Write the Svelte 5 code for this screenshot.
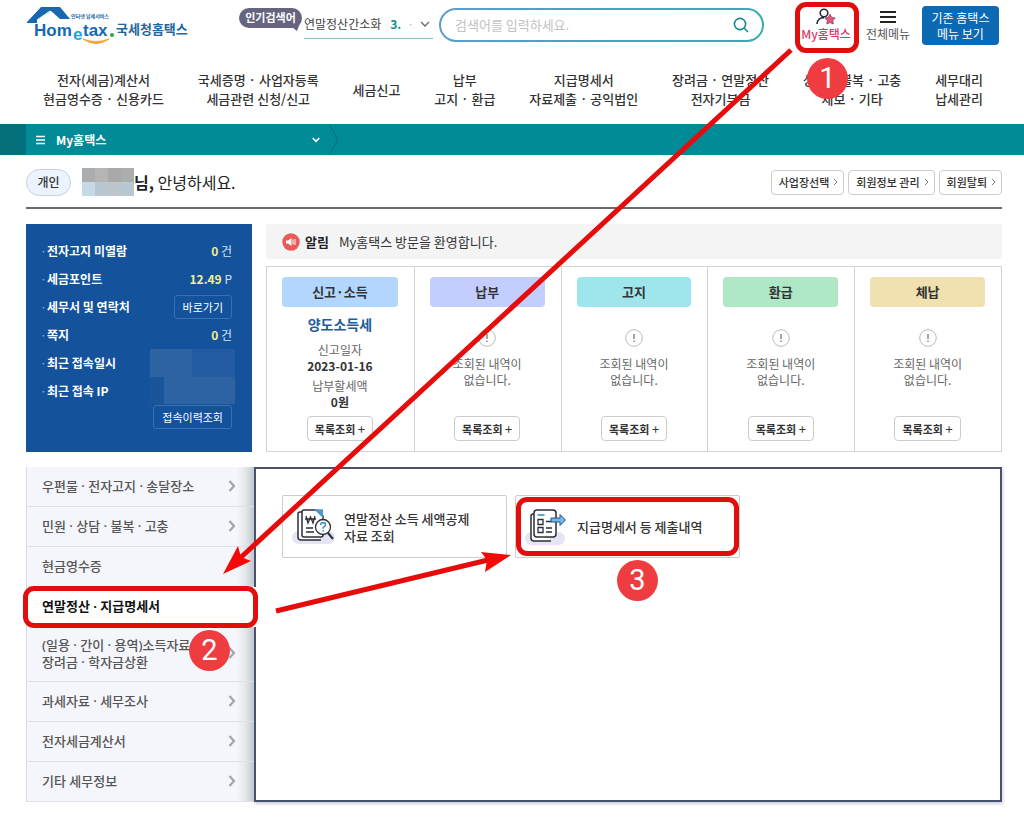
<script>
  const nav = [
    ['전자(세금)계산서', '현금영수증 · 신용카드'],
    ['국세증명 · 사업자등록', '세금관련 신청/신고'],
    ['세금신고'],
    ['납부', '고지 · 환급'],
    ['지급명세서', '자료제출 · 공익법인'],
    ['장려금 · 연말정산', '전자기부금'],
    ['상담 · 불복 · 고충', '제보 · 기타'],
    ['세무대리', '납세관리']
  ];
  const memberLinks = ['사업장선택', '회원정보 관리', '회원탈퇴'];
  const cards = [
    { name: '신고·소득', color: '#b3d6ff', filed: true },
    { name: '납부', color: '#c3ceff' },
    { name: '고지', color: '#9fe6ec' },
    { name: '환급', color: '#aee8c6' },
    { name: '체납', color: '#f1e0b0' }
  ];
  const side = [
    { lines: ['우편물 · 전자고지 · 송달장소'] },
    { lines: ['민원 · 상담 · 불복 · 고충'] },
    { lines: ['현금영수증'], plain: true },
    { lines: ['연말정산 · 지급명세서'], active: true },
    { lines: ['(일용 · 간이 · 용역)소득자료', '장려금 · 학자금상환'] },
    { lines: ['과세자료 · 세무조사'] },
    { lines: ['전자세금계산서'] },
    { lines: ['기타 세무정보'] }
  ];
</script>

<div class="page">
  <header class="top">
    <a class="logo" href="#home" aria-label="홈택스">
      <svg width="90" height="40" viewBox="0 0 90 40">
        <path d="M1 16 L15 1 H34 L44 13 H34 L25 5 L11 14 V17 H1 Z" fill="#1768b0" />
        <path d="M11 14 L24 5 L34 14" fill="none" stroke="#fff" stroke-width="1" />
        <text x="45" y="12" class="tiny">인터넷 납세서비스</text>
        <text x="8" y="30" class="word">Hom</text>
        <text x="47" y="34" class="word e">e</text>
        <text x="57" y="30" class="word">tax</text>
        <circle cx="86" cy="29" r="2" fill="#27a844" />
        <path d="M57 33 Q70 42 83 33 Q70 38 57 33 Z" fill="#f0a83c" stroke="#f0a83c" />
      </svg>
      <span>국세청홈택스</span>
    </a>
    <span class="badge">인기검색어</span>
    <button class="ticker" type="button">
      <span>연말정산간소화</span><b>3.</b><i>·</i>
      <svg width="10" height="6" viewBox="0 0 10 6"><path d="M1 1l4 4 4-4" fill="none" stroke="#666" stroke-width="1.3" /></svg>
    </button>
    <div class="search">
      <input type="text" aria-label="검색어" placeholder="검색어를 입력하세요." />
      <button type="button" aria-label="검색">
        <svg width="16" height="16" viewBox="0 0 16 16" fill="none" stroke="#14888f" stroke-width="1.6"><circle cx="7" cy="7" r="5.6" /><path d="M11 11l4 4" /></svg>
      </button>
    </div>
    <a class="tool my" href="#my">
      <svg width="20" height="17" viewBox="0 0 20 17"><circle cx="8" cy="5" r="3.8" fill="none" stroke="#222a40" stroke-width="1.6" /><path d="M1 16c0-4 3-6.4 7-6.4" fill="none" stroke="#222a40" stroke-width="1.6" /><path d="M14 6.300l1.700 3.100 3.500.6-2.400 2.500.5 3.500-3.300-1.500-3.200 1.500.5-3.500-2.500-2.500 3.500-.6z" fill="#e05a7c" stroke="#a02d50" stroke-width=".8" /></svg>
      <span>My홈택스</span>
      <em class="ring"></em>
      <em class="num one">1</em>
    </a>
    <a class="tool" href="#all">
      <svg width="16" height="17" viewBox="0 0 16 17"><path d="M0 4h16M0 9h16M0 14h16" stroke="#222" stroke-width="2" /></svg>
      <span>전체메뉴</span>
    </a>
    <button class="old" type="button">기존 홈택스<br />메뉴 보기</button>
  </header>

  <nav class="gnb">
    {#each nav as item}
      <a href="#menu">{#each item as line}<span>{line}</span>{/each}</a>
    {/each}
  </nav>

  <div class="crumb">
    <button type="button">
      <svg width="9" height="10" viewBox="0 0 9 10"><path d="M0 1.5h9M0 5h9M0 8.5h9" stroke="#fff" stroke-width="1.5" /></svg>
      <span>My홈택스</span>
      <svg width="8" height="6" viewBox="0 0 8 6"><path d="M.7 1l3.3 3.4L7.300 1" fill="none" stroke="#fff" stroke-width="1.6" /></svg>
    </button>
    <svg width="11" height="31" viewBox="0 0 11 31"><path d="M1 0l9 15.500L1 31" fill="none" stroke="#066f79" /></svg>
  </div>

  <main>
    <section class="hello">
      <span class="pill">개인</span>
      <span class="mosaic"><i></i><i></i><i></i><i></i><i></i><i></i><i></i><i></i></span>
      <h1><b>님,</b> 안녕하세요.</h1>
      <div class="links">
        {#each memberLinks as l}
          <button type="button">{l}<svg width="5" height="8" viewBox="0 0 5 8"><path d="M1 1l3 3-3 3" fill="none" stroke="#777" /></svg></button>
        {/each}
      </div>
    </section>

    <div class="upper">
      <section class="info">
        <dl>
          <div><dt>전자고지 미열람</dt><dd><b>0</b> 건</dd></div>
          <div><dt>세금포인트</dt><dd><b>12.49</b> P</dd></div>
          <div><dt>세무서 및 연락처</dt><dd><button type="button">바로가기</button></dd></div>
          <div><dt>쪽지</dt><dd><b>0</b> 건</dd></div>
          <div><dt>최근 접속일시</dt><dd class="masked"><span class="veil"><i></i><i></i><i></i><i></i><i></i><i></i></span></dd></div>
          <div><dt>최근 접속 IP</dt><dd></dd></div>
        </dl>
        <button class="history" type="button">접속이력조회</button>
      </section>

      <div class="status">
        <p class="notice">
          <svg width="18" height="18" viewBox="0 0 18 18"><circle cx="9" cy="9" r="8.700" fill="#ea5a58" /><path d="M4 7.500h2l3.500-2.500v8L6 10.500H4z" fill="#fff" /><path d="M11 6.500v5M13 6v6" stroke="#fff" stroke-width="1" /></svg>
          <b>알림</b><span>My홈택스 방문을 환영합니다.</span>
        </p>
        <div class="cards">
          {#each cards as c}
            <article>
              <h2 style:background={c.color}>{c.name}</h2>
              {#if c.filed}
                <div class="filed">
                  <h3>양도소득세</h3>
                  <p>신고일자<b>2023-01-16</b></p>
                  <p>납부할세액<b>0원</b></p>
                </div>
              {:else}
                <div class="none">
                  <svg width="18" height="18" viewBox="0 0 18 18"><circle cx="9" cy="9" r="8.300" fill="#fff" stroke="#bbb" /><path d="M9 5v5M9 11.500v1.500" stroke="#888" stroke-width="1.500" /></svg>
                  <p>조회된 내역이<br />없습니다.</p>
                </div>
              {/if}
              <button type="button">목록조회 <span>+</span></button>
            </article>
          {/each}
        </div>
      </div>
    </div>

    <div class="lower">
      <ul class="side">
        {#each side as s}
          <li class:active={s.active}>
            <a href="#side">
              <span>{#each s.lines as l}<span class="line">{l}</span>{/each}</span>
              {#if !s.plain && !s.active}
                <svg width="8" height="12" viewBox="0 0 8 12"><path d="M1.500 1l4.500 5-4.500 5" fill="none" stroke="#a3a5aa" stroke-width="2.200" /></svg>
              {/if}
            </a>
            {#if s.active}<em class="ring"></em><em class="num two">2</em>{/if}
          </li>
        {/each}
      </ul>
      <section class="panel">
        <a class="tile" href="#yearend">
          <svg width="44" height="38" viewBox="0 0 44 38">
            <rect x="0" y="23" width="43" height="13" rx="6.500" fill="#e3e5f2" />
            <path d="M10 4H8a2 2 0 0 0-2 2v23a3 3 0 0 0 3 3h20" fill="#fff" stroke="#2a2e38" stroke-width="1.500" />
            <path d="M12 2h13l6 6v19a2 2 0 0 1-2 2H12a2 2 0 0 1-2-2V4a2 2 0 0 1 2-2z" fill="#fff" stroke="#2a2e38" stroke-width="1.500" />
            <path d="M22 1.300h9v9z" fill="#4c9ad0" />
            <path d="M14 8l2 7 2.500-6 2.500 6 2-7M13 11h11M14 20h7M14 24h8" fill="none" stroke="#2a2e38" stroke-width="1.300" />
            <path d="M36 25l5 6" stroke="#2a2e38" stroke-width="2" />
            <circle cx="31" cy="19" r="7.500" fill="#fff" stroke="#2a2e38" stroke-width="1.300" />
            <path d="M28.500 17q.3-2.500 2.700-2.500 2.300.2 2.300 2.200 0 1.300-2.300 2.700v1.300M31.200 22v1.500" fill="none" stroke="#3390cd" stroke-width="1.400" />
          </svg>
          <span>연말정산 소득 세액공제<br />자료 조회</span>
        </a>
        <a class="tile" href="#statements">
          <svg width="44" height="38" viewBox="0 0 44 38">
            <rect x="0" y="24" width="40" height="13" rx="6.500" fill="#e3e5f2" />
            <path d="M9 6H8a2 2 0 0 0-2 2v22a3 3 0 0 0 3 3h17" fill="#fff" stroke="#2a2e38" stroke-width="1.500" />
            <rect x="9" y="2" width="22" height="27" rx="3" fill="#fff" stroke="#2a2e38" stroke-width="1.500" />
            <path d="M12.500 7h7" stroke="#3390cd" stroke-width="1.600" />
            <path d="M13 11.500h5v5h-5zM13 19.500h5v5h-5zM21 13.500h6M21 20h6M21 24h6" fill="none" stroke="#2a2e38" stroke-width="1.300" />
            <path d="M26 10h9V6.500l5.500 5.500-5.500 5.500V14h-9z" fill="#72b7ec" stroke="#25577e" />
          </svg>
          <span>지급명세서 등 제출내역</span>
          <em class="ring"></em><em class="num three">3</em>
        </a>
      </section>
    </div>
  </main>

  <svg class="arrows" width="1024" height="820" viewBox="0 0 1024 820" aria-hidden="true">
    <g stroke="#e60c0c" stroke-width="5"><path d="M791 50L238 560M276 611L488 560" /></g>
    <path d="M223 574L238 546 241 557 251 561zM511 555L481 552 487 560 485 572z" fill="#f50808" />
  </svg>
</div>

<style>
  :global(body) { margin: 0; background: #fff; }
  .page { position: relative; overflow-x: clip; font: 13px/18px "Noto Sans CJK KR", sans-serif; color: #333; }
  .page * { box-sizing: border-box; }
  a { color: inherit; text-decoration: none; }
  button { font: inherit; color: inherit; background: none; border: 0; padding: 0; cursor: pointer; white-space: nowrap; }
  h1, h2, h3, p, dl, dd, ul { margin: 0; padding: 0; }
  svg { display: block; flex: none; }
  em, i { font-style: normal; }

  .top { display: flex; align-items: flex-start; padding: 6px 25px 0 26px; }
  .logo { display: flex; align-items: center; width: 213px; flex: none; color: #22669f; font-weight: 700; }
  .logo span { padding-top: 6px; white-space: nowrap; }
  .tiny { font-size: 5px; fill: #22669f; }
  .word { font: 700 17px "Liberation Sans", sans-serif; fill: #1768b0; }
  .word.e { fill: #1da4d8; }
  .badge { position: relative; margin-top: 2px; width: 63px; height: 20px; border-radius: 10px; background: #66647f; color: #fff; font-size: 11px; font-weight: 700; line-height: 19px; text-align: center; }
  .badge::after { content: ""; position: absolute; right: 1px; bottom: -3px; width: 9px; height: 10px; background: #66647f; clip-path: polygon(0 60%, 100% 0, 55% 100%); }
  .ticker { display: flex; align-items: center; margin: 4px 6px 0 2px; width: 129px; height: 29px; border-bottom: 1px solid #8bb9c3; font-size: 12px; color: #444; }
  .ticker b { margin-left: 9px; color: #0d8d91; }
  .ticker i { margin-left: 6px; color: #bbb; }
  .ticker svg { margin: 0 3px 0 auto; }
  .search { display: flex; align-items: center; flex: 1; min-width: 0; margin-top: 2px; height: 34px; padding: 0 13px 0 14px; border: 2px solid transparent; border-radius: 17px; background: linear-gradient(#fff, #fff) padding-box, linear-gradient(90deg, #5b9ccb, #35adb0) border-box; }
  .search input { flex: 1; min-width: 0; border: 0; outline: 0; padding: 0; background: none; font: inherit; }
  .search input::placeholder { color: #c2c2c2; }
  .tool { position: relative; display: flex; flex-direction: column; align-items: center; width: 50px; margin: 2px 0 0 12px; font-size: 12px; color: #555; white-space: nowrap; }
  .tool.my { margin-left: 37px; color: #d73a68; font-weight: 500; }
  .old { margin-left: 9px; width: 77px; height: 39px; border-radius: 4px; background: #0c69b3; color: #fff; font-size: 12px; line-height: 16px; }

  .gnb { display: flex; align-items: center; justify-content: space-between; padding: 24px 41px 16px 43px; line-height: 19px; font-weight: 500; }
  .gnb a { display: flex; flex-direction: column; align-items: center; white-space: nowrap; }

  .crumb { display: flex; background: linear-gradient(90deg, #066f7c 26px, #018b96 26px); height: 31px; }
  .crumb button { display: flex; align-items: center; width: 302px; margin-left: 26px; padding: 0 8px 0 10px; color: #fff; font-size: 12px; font-weight: 700; }
  .crumb span { flex: 1; text-align: left; margin-left: 11px; }

  main { padding: 0 22px 18px 26px; }
  .hello { display: flex; align-items: center; height: 54px; padding-top: 2px; border-bottom: 2px solid #6a6a6a; }
  .pill { width: 45px; height: 27px; border: 1px solid #c4d0dc; border-radius: 14px; background: #ebf4fe; font-size: 12px; line-height: 24px; text-align: center; font-weight: 500; }
  .mosaic { display: grid; grid-template-columns: repeat(4, 13px); grid-template-rows: 14px 14px; margin-left: 11px; }
  .mosaic i { background: #acadaf; }
  .mosaic i:nth-child(2) { background: #b5b5b6; }
  .mosaic i:nth-child(3) { background: #a9a9a9; }
  .mosaic i:nth-child(n + 5) { background: #b7c8d2; }
  .mosaic i:nth-child(5) { background: #c4dbe5; }
  .mosaic i:nth-child(7) { background: #bdc6cd; }
  h1 { font-size: 16px; line-height: 24px; font-weight: 400; color: #222; }
  .links { display: flex; gap: 4px; margin-left: auto; }
  .links button { display: flex; align-items: center; gap: 4px; height: 25px; padding: 0 5px 0 7px; border: 1px solid #ccc; border-radius: 4px; font-size: 11px; font-weight: 500; }

  .upper { display: flex; gap: 14px; margin-top: 15px; }
  .info { width: 226px; flex: none; padding: 13px 20px 0 14px; background: #14529b; color: #fff; font-size: 12px; }
  .info dl div { display: flex; justify-content: space-between; align-items: center; height: 28px; }
  .info dt { font-weight: 700; }
  .info dt::before { content: "·"; display: inline-block; width: 7px; font-weight: 400; color: #8fb1d8; }
  .info dd { color: #d3e2f5; }
  .info dd b { color: #f3f08d; }
  .info button { height: 24px; border: 1px solid #3a70b0; border-radius: 3px; padding: 0 8px; font-size: 11px; line-height: 20px; color: #fff; }
  .info .history { display: block; margin: 0 0 0 auto; padding: 0 8px; }
  .masked { position: relative; width: 82px; height: 28px; }
  .veil { position: absolute; left: 0; top: 0; display: grid; grid-template-columns: 14px 28px 1fr; grid-template-rows: 28px 27px; width: 85px; }
  .veil i { background: #2d62a3; }
  .veil i:nth-child(3) { background: #225ba2; }
  .veil i:nth-child(4) { background: #1a559c; }

  .status { flex: 1; min-width: 0; }
  .notice { display: flex; align-items: center; height: 35px; padding: 0 16px; background: #f4f4f4; border-radius: 3px; }
  .notice b { margin: 0 10px 0 5px; color: #222; }
  .cards { display: grid; grid-template-columns: repeat(5, 1fr); margin-top: 7px; border: 1px solid #d3d3d3; }
  .cards article { display: flex; flex-direction: column; align-items: center; padding: 10px 16px 10px 15px; text-align: center; font-size: 12px; line-height: 16px; }
  .cards article + article { border-left: 1px solid #d3d3d3; }
  h2 { width: 100%; border-radius: 4px; font-size: 13px; line-height: 30px; font-weight: 700; }
  .filed, .none { height: 109px; color: #666; }
  h3 { margin: 7px 0 8px; font-size: 14px; line-height: 20px; color: #205c9a; }
  .filed p + p { margin-top: 4px; }
  .filed b { display: block; color: #333; }
  .none { padding-top: 22px; }
  .none svg { margin: 0 auto 9px; }
  .cards button { height: 25px; padding: 0 7px; border: 1px solid #ccc; border-radius: 4px; background: #fff; font-size: 11px; font-weight: 700; line-height: 20px; }
  .cards button span { font-size: 13px; font-weight: 400; }

  .lower { display: flex; margin-top: 15px; }
  .side { width: 228px; flex: none; list-style: none; border-left: 1px solid #d9dbe0; background: linear-gradient(90deg, #f4f6fb 210px, #e3e5e9 219px, #bec2c8 228px); font-family: "Noto Sans", "Noto Sans CJK KR", sans-serif; }
  .side li { position: relative; border-bottom: 1px solid #dfe1e6; font-weight: 500; color: #555; }
  .side a { display: flex; align-items: center; justify-content: space-between; min-height: 39px; padding: 0 18px 0 15px; }
  .side a svg { margin-top: -2px; }
  .line { display: block; line-height: 17px; }
  .side li:nth-child(5) a { min-height: 54px; }
  .side .active { margin-right: -2px; background: #fff; color: #111; font-weight: 700; z-index: 1; border-color: #fff; }
  .panel { flex: 1; display: flex; align-items: flex-start; gap: 8px; padding: 26px; border: 2px solid #47526f; box-shadow: 1px 2px 3px #ccd; }
  .tile { position: relative; display: flex; align-items: center; gap: 8px; width: 225px; height: 63px; padding: 0 9px; border: 1px solid #ccc; border-radius: 2px; font-weight: 500; line-height: 17px; white-space: nowrap; }

  .ring { position: absolute; z-index: 2; border: 5px solid #e20e0e; border-radius: 11px; pointer-events: none; }
  .my .ring { inset: -6px -8px -10px -6px; }
  .side .ring { inset: -1px -2px -2px -4px; }
  .tile .ring { inset: 1px 0; }
  .num { position: absolute; z-index: 3; width: 41px; height: 41px; border-radius: 50%; background: #ef3c40; color: #fff; font: 400 29px/41px Roboto, sans-serif; text-align: center; }
  .one { left: 6px; top: 50px; }
  .two { left: 162px; top: 43px; }
  .three { left: 101px; top: 64px; }
  .arrows { position: absolute; left: 0; top: 0; z-index: 2; pointer-events: none; }
</style>
